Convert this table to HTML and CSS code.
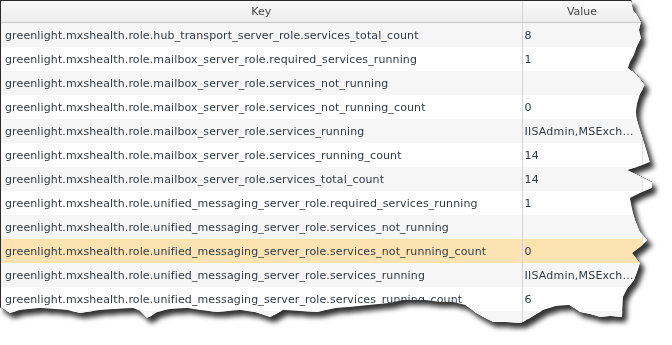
FILE: index.html
```html
<!DOCTYPE html>
<html>
<head>
	<meta charset="utf-8">
	<title>Health Keys</title>
	<link rel="stylesheet" href="styles.css">
</head>
<body>
	<div class="frame">
		<div class="sheet">
			<table class="grid">
				<colgroup>
					<col class="keyCol">
					<col class="valueCol">
				</colgroup>
				<tr>
					<th>Key</th>
					<th>Value</th>
				</tr>
				<tr class="odd">
					<td>greenlight.mxshealth.role.hub_transport_server_role.services_total_count</td>
					<td>8</td>
				</tr>
				<tr>
					<td>greenlight.mxshealth.role.mailbox_server_role.required_services_running</td>
					<td>1</td>
				</tr>
				<tr class="odd">
					<td>greenlight.mxshealth.role.mailbox_server_role.services_not_running</td>
					<td></td>
				</tr>
				<tr>
					<td>greenlight.mxshealth.role.mailbox_server_role.services_not_running_count</td>
					<td>0</td>
				</tr>
				<tr class="odd">
					<td>greenlight.mxshealth.role.mailbox_server_role.services_running</td>
					<td>IISAdmin,MSExchangeADTopology,MSExchangeIS</td>
				</tr>
				<tr>
					<td>greenlight.mxshealth.role.mailbox_server_role.services_running_count</td>
					<td>14</td>
				</tr>
				<tr class="odd">
					<td>greenlight.mxshealth.role.mailbox_server_role.services_total_count</td>
					<td>14</td>
				</tr>
				<tr>
					<td>greenlight.mxshealth.role.unified_messaging_server_role.required_services_running</td>
					<td>1</td>
				</tr>
				<tr class="odd">
					<td>greenlight.mxshealth.role.unified_messaging_server_role.services_not_running</td>
					<td></td>
				</tr>
				<tr class="selected">
					<td>greenlight.mxshealth.role.unified_messaging_server_role.services_not_running_count</td>
					<td>0</td>
				</tr>
				<tr class="odd">
					<td>greenlight.mxshealth.role.unified_messaging_server_role.services_running</td>
					<td>IISAdmin,MSExchangeADTopology,MSExchangeUM</td>
				</tr>
				<tr>
					<td>greenlight.mxshealth.role.unified_messaging_server_role.services_running_count</td>
					<td>6</td>
				</tr>
				<tr class="odd">
					<td>greenlight.mxshealth.role.unified_messaging_server_role.services_total_count</td>
					<td>6</td>
				</tr>
			</table>
		</div>
	</div>
</body>
</html>
```

FILE: styles.css
```css
html {
	background-color: white;
}

body {
	margin: 0;
	font-family: "DejaVu Sans", Verdana, sans-serif;
	font-size: 11px;
	letter-spacing: 0.12px;
	color: #303a44;
}

/* torn paper look: outline + soft shadow around the clipped sheet */
.frame {
	width: 672px;
	height: 345px;
	filter: drop-shadow(0 0 0.5px #111) drop-shadow(0 0 0.5px #111) drop-shadow(4px 5px 2.5px rgba(0, 0, 0, 0.8));
}

.sheet {
	width: 672px;
	height: 340px;
	overflow: hidden;
	background-color: white;
	border-top: 1px solid #2a2a2a;
	border-left: 1px solid #2a2a2a;
	box-sizing: border-box;
	clip-path: polygon(0 0, 631px 0, 633px 10px, 637px 15px, 641px 22px, 639px 30px, 641px 38px, 637px 46px, 634px 55px, 630px 62px, 628px 68px, 636px 74px, 645px 85px, 640px 94px, 637px 104px, 636px 112px, 637px 120px, 640px 130px, 645px 145px, 650px 162px, 640px 166px, 627px 170px, 640px 176px, 652px 182px, 652px 188px, 640px 193px, 630px 198px, 632px 208px, 635px 220px, 640px 232px, 648px 240px, 640px 247px, 632px 253px, 640px 263px, 637px 272px, 634px 280px, 627px 289px, 623px 297px, 622px 317px, 610px 316px, 600px 317px, 590px 314px, 580px 312px, 569px 305px, 556px 306px, 543px 310px, 530px 318px, 521px 323px, 505px 322px, 493px 322px, 485px 318px, 476px 313px, 465px 305px, 453px 302px, 440px 302px, 425px 300px, 403px 300px, 390px 303px, 369px 305px, 350px 307px, 336px 308px, 317px 312px, 300px 311px, 283px 310px, 276px 314px, 270px 317px, 255px 312px, 240px 310px, 217px 312px, 200px 310px, 187px 308px, 170px 309px, 157px 312px, 151px 316px, 147px 318px, 140px 311px, 133px 308px, 115px 309px, 100px 310px, 80px 313px, 67px 310px, 55px 309px, 40px 308px, 20px 310px, 10px 313px, 5px 310px, 0 307px);
}

.grid {
	border-collapse: collapse;
	table-layout: fixed;
	width: 641px;
}

.keyCol {
	width: 521px;
}

.valueCol {
	width: 120px;
}

.grid th {
	height: 21px;
	padding: 0;
	font-weight: normal;
	color: #444;
	letter-spacing: 0;
	background: linear-gradient(#fafafa, #ececec);
	border-bottom: 1px solid #c8c8c8;
	border-right: 1px solid #d4d4d4;
}

.grid td {
	height: 24px;
	padding: 0 0 0 4px;
	white-space: nowrap;
	overflow: hidden;
	text-overflow: ellipsis;
	border-right: 1px solid #d4d4d4;
}

.grid th:last-child,
.grid td:last-child {
	border-right: 1px solid #e2e2e2;
}

.grid td:last-child {
	padding-left: 2px;
	padding-right: 7px;
	letter-spacing: 0.2px;
}

.odd {
	background-color: #f6f6f6;
}

.selected {
	background-color: #fde3b1;
}
```
